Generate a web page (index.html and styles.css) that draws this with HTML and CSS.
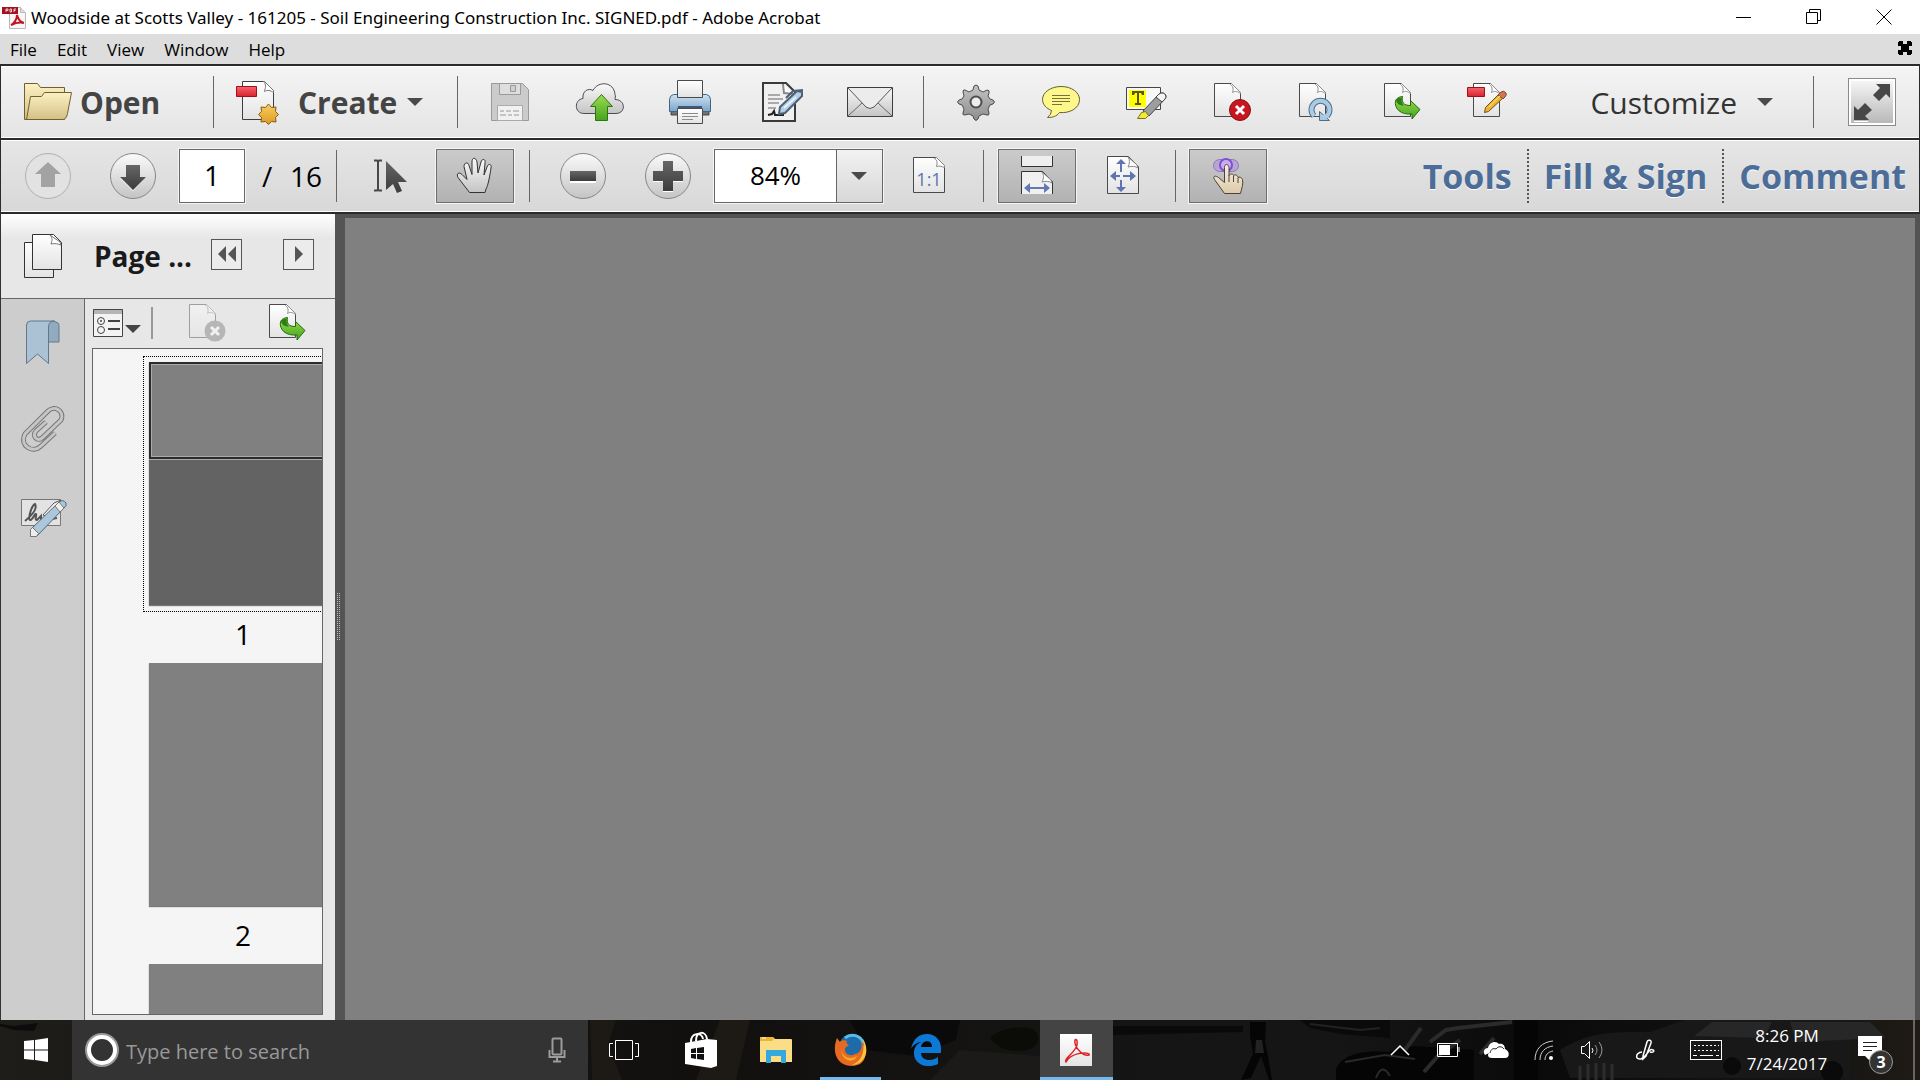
FILE: index.html
```html
<!DOCTYPE html>
<html lang="en">
<head>
	<meta charset="utf-8">
	<title>Woodside at Scotts Valley - 161205 - Soil Engineering Construction Inc. SIGNED.pdf - Adobe Acrobat</title>
	<link rel="stylesheet" href="styles.css">
</head>
<body>
  <!-- shared gradients and shapes -->
  <svg class="defs" width="0" height="0" aria-hidden="true">
    <defs>
      <linearGradient id="paper" x1="0" y1="0" x2="0" y2="1"><stop offset="0" stop-color="#fff"/><stop offset="1" stop-color="#e3e3e3"/></linearGradient>
      <linearGradient id="metal" x1="0" y1="0" x2="0" y2="1"><stop offset="0" stop-color="#fafafa"/><stop offset="1" stop-color="#c4c4c4"/></linearGradient>
      <linearGradient id="steel" x1="0" y1="0" x2="0" y2="1"><stop offset="0" stop-color="#c4c4c4"/><stop offset="1" stop-color="#8d8d8d"/></linearGradient>
      <linearGradient id="dark" x1="0" y1="0" x2="0" y2="1"><stop offset="0" stop-color="#666"/><stop offset="1" stop-color="#3c3c3c"/></linearGradient>
      <linearGradient id="green" x1="0" y1="0" x2="0" y2="1"><stop offset="0" stop-color="#9bdc52"/><stop offset="1" stop-color="#45a41c"/></linearGradient>
      <linearGradient id="red" x1="0" y1="0" x2="0" y2="1"><stop offset="0" stop-color="#f5646c"/><stop offset="1" stop-color="#d9222e"/></linearGradient>
      <linearGradient id="blue" x1="0" y1="0" x2="0" y2="1"><stop offset="0" stop-color="#cfe2f1"/><stop offset="1" stop-color="#7ba4ca"/></linearGradient>
      <linearGradient id="gold" x1="0" y1="0" x2="0" y2="1"><stop offset="0" stop-color="#f8ce62"/><stop offset="1" stop-color="#dc9a22"/></linearGradient>
      <linearGradient id="folder" x1="0" y1="0" x2="0" y2="1"><stop offset="0" stop-color="#fdf2c4"/><stop offset="1" stop-color="#d3bf84"/></linearGradient>
      <linearGradient id="skin" x1="0" y1="0" x2="0" y2="1"><stop offset="0" stop-color="#f8efe0"/><stop offset="1" stop-color="#dccaa9"/></linearGradient>
      <symbol id="page" viewBox="0 0 30 36">
        <path d="M1.500 1.500h17l9 9v24h-26z" fill="url(#paper)" stroke="#4a4a4a"/>
        <path d="M18.500 1.500l-1 1c3 2 3 5 2 8 3-2 5-1 8 1v-1z" fill="#fff" stroke="#8a8a8a"/>
      </symbol>
      <symbol id="extract" viewBox="0 0 52 52">
        <use href="#page" x="8" y="6" width="30" height="36"/>
        <path d="M20.500 24.500c1-2 4-4 7-4-1 6 1 9 8 9v-5l9.500 9-8 9.500v-5c-11 1-18-5-16.500-13.500z" fill="url(#green)" stroke="#1f6b0e"/>
        <path d="M21 24.500c1-2 3-3 6-3-1 4 0 6 2 8-5 0-7-2-8-5z" fill="#2c7d12"/>
      </symbol>
    </defs>
  </svg>

  <header class="titlebar">
    <svg class="app-icon" width="24" height="24" viewBox="0 0 24 24">
      <path d="M7.500 1.500h11l5 5v16h-16z" fill="#f6f6f6" stroke="#b9b9b9"/>
      <path d="M18.500 1.500v5h5" fill="#ddd" stroke="#b9b9b9"/>
      <path d="M9 19c3-1 6-6 6-10 1 4 3 7 7 8-4-1-9 0-13 2z" fill="none" stroke="#c5121d" stroke-width="2"/>
      <path d="M0 1h16v7H0z" fill="#a5121f"/>
      <path d="M4 6V3h2v1.500H4M8 3v3h1.500V3zM12 6V3h2M12 4.500h1.500" fill="none" stroke="#eccdd0"/>
    </svg>
    <span class="title">Woodside at Scotts Valley - 161205 - Soil Engineering Construction Inc. SIGNED.pdf - Adobe Acrobat</span>
    <div class="window-buttons">
      <button aria-label="Minimize"><svg width="16" height="16" viewBox="0 0 16 16"><path d="M0 8.500h15" stroke="#000"/></svg></button>
      <button aria-label="Restore"><svg width="16" height="16" viewBox="0 0 16 16"><path d="M.5 3.500h11v11H.5zM3.500 3.500v-3h11v11h-3" fill="none" stroke="#000"/></svg></button>
      <button aria-label="Close"><svg width="16" height="16" viewBox="0 0 16 16"><path d="M.5.5l15 15M15.500.5l-15 15" stroke="#000"/></svg></button>
    </div>
  </header>

  <nav class="menubar">
    <button>File</button>
    <button>Edit</button>
    <button>View</button>
    <button>Window</button>
    <button>Help</button>
    <button class="doc-close" aria-label="Close document"><svg width="14" height="14" viewBox="0 0 14 14"><path d="M1 1V0h4v3h4V0h4v1h1v4h-3v4h3v4h-1v1H9v-3H5v3H1v-1H0V9h3V5H0V1z" fill="#000"/></svg></button>
  </nav>

  <div class="toolbar toolbar-main">
    <button class="labelled open">
      <svg width="52" height="52" viewBox="0 0 52 52">
        <path d="M2.500 43.500v-36h13l3 4h24v32z" fill="url(#folder)" stroke="#71602e"/>
        <path d="M4.500 43.500l4-23h11l3-4h27l-4 21q-1 6-5 6z" fill="url(#folder)" stroke="#71602e"/>
      </svg>
      <span>Open</span>
    </button>
    <i class="sep"></i>
    <button class="labelled create">
      <svg width="52" height="52" viewBox="0 0 52 52">
        <path d="M10.500 5.500h22l9 9v29h-31z" fill="url(#paper)" stroke="#3d3d3d"/>
        <path d="M31.500 5.500c3 3 2 6 1 10 3-2 6-1 9 1v-2l-9-9z" fill="#fff" stroke="#777"/>
        <path d="M4.500 10.500h20v10h-20z" fill="url(#red)" stroke="#a01019"/>
        <path d="M36.500 28l3 3.500 4.500-.5-.5 4.500 3 3-3 3 .5 4.500-4.500-.5-3 3-3-3-4.500.5.500-4.500-3-3 3-3-.5-4.500 4.500.5z" fill="url(#gold)" stroke="#8a5a17"/>
      </svg>
      <span>Create</span>
      <svg class="caret" width="16" height="10" viewBox="0 0 16 10"><path d="M0 1h16L8 9z" fill="#4a4a4a"/></svg>
    </button>
    <i class="sep"></i>
    <div class="file-tools">
      <button aria-label="Save" disabled><svg width="52" height="52" viewBox="0 0 52 52">
        <path d="M7.500 7.500h31l6 6v31h-37z" fill="#cbcbcb" stroke="#9a9a9a"/>
        <path d="M15.500 7.500h21v11h-21z" fill="#dedede" stroke="#9a9a9a"/><path d="M26.500 9.500h5v6h-5z" fill="#d0d0d0" stroke="#999"/>
        <path d="M13.500 29.500h25v15h-25z" fill="#f1f1f1" stroke="#aaa"/><path d="M16 35h4m2 0h5m2 0h6M16 39h6m2 0h4m2 0h5" stroke="#c4c4c4" stroke-width="2"/>
      </svg></button>
      <button aria-label="Upload"><svg width="52" height="52" viewBox="0 0 52 52">
        <path d="M10 37.500c-10 0-10-14-1-15-1-7 5-11 10-8 5-10 21-9 22 4 1 2 0 3 0 5 11 0 11 14 1 14z" fill="url(#metal)" stroke="#4d4d4d"/>
        <path d="M27.500 18.500l11 12h-5v14h-12v-14h-5z" fill="url(#green)" stroke="#2d7513"/>
      </svg></button>
      <button aria-label="Print"><svg width="52" height="52" viewBox="0 0 52 52">
        <path d="M7 33h38v6H7z" fill="#6d7178" stroke="#44484d"/>
        <path d="M5.500 35.500v-12q0-4 4-5h33q4 1 4 5v12z" fill="url(#blue)" stroke="#426482"/>
        <path d="M13.500 4.500h25v17h-25z" fill="url(#paper)" stroke="#4a4a4a"/>
        <path d="M14 30h24v3H14z" fill="#3b5a78"/>
        <path d="M13.500 32.500h25v15h-25z" fill="url(#paper)" stroke="#4a4a4a"/><path d="M18 37.500h16M18 40.500h16M18 43.500h11" stroke="#8b8b8b"/>
      </svg></button>
      <button aria-label="Sign"><svg width="52" height="52" viewBox="0 0 52 52">
        <path d="M9 7h23l9 9v29H9z" fill="#f0f0f0" stroke="#3a3a3a" stroke-width="2"/><path d="M29 8l1 9 10 1" fill="#fff" stroke="#888" stroke-width="2"/>
        <path d="M14 19h12M14 23h15M14 27h11M14 32h8" stroke="#aaa" stroke-width="2"/>
        <path d="M14 39l4-1 2-3 1 4h9" fill="none" stroke="#222" stroke-width="2"/>
        <path d="M25 38l1-7 17-16 5 1v4L31 37z" fill="#b5cfe6" stroke="#4d6277" stroke-width="2"/><path d="M32 22l7-7 10-1" fill="none" stroke="#4d6277" stroke-width="2"/><path d="M30 32l12-11" stroke="#e6f1fa" stroke-width="2"/>
      </svg></button>
      <button aria-label="Email"><svg width="52" height="52" viewBox="0 0 52 52">
        <path d="M3.500 11.500h45v29h-45z" fill="url(#metal)" stroke="#3e3e3e"/><path d="M4 40l14-13M48 40L34 27" stroke="#666"/>
        <path d="M4 12l18 19q4 3 8 0l18-19" fill="#ececec" stroke="#555"/>
      </svg></button>
    </div>
    <i class="sep"></i>
    <div class="page-tools">
      <button aria-label="Preferences"><svg width="52" height="52" viewBox="0 0 52 52">
        <path d="M23 14l1-4q2-2 4 0l1 4 4 2 4-2q3 0 2 3l-1 3 2 3 3 1q3 2 0 4l-3 1-2 4 1 4q0 3-2 2l-4-1-4 2-1 3q-2 3-4 0l-1-3-4-2-4 1q-3 0-2-2l1-4-2-4-3-1q-3-2 0-4l3-1 2-3-1-4q0-3 2-2l4 2z" fill="url(#steel)" stroke="#4e4e4e"/>
        <circle cx="26" cy="26" r="5.500" fill="#eee" stroke="#4e4e4e" stroke-width="2"/>
      </svg></button>
      <button aria-label="Comment"><svg width="52" height="52" viewBox="0 0 52 52">
        <path d="M26 10.500c11 0 18.500 6 18.500 13 0 9-10 14-20 13-3 4-7 5-12 5q4-3 4-7c-5-2-9-6-9-11 0-7 8-13 18.500-13z" fill="#fdf78c" stroke="#66602f"/>
        <path d="M17 19.500h18M17 22.500h18M17 25.500h18M17 28.500h10" stroke="#77713c"/>
      </svg></button>
      <button aria-label="Highlight text"><svg width="52" height="52" viewBox="0 0 52 52">
        <path d="M6.500 11.500h34v22h-34z" fill="#f7f7f7" stroke="#444"/><path d="M9 14h17v17H9z" fill="#ff0"/>
        <path d="M12 15h12v4h-2l-1-2h-2v10h2v2h-6v-2h2V17h-2l-1 2h-2z" fill="#5c5413"/>
        <path d="M23 35l16-17c4-3 9 1 6 5L29 40z" fill="#9e9e9e" stroke="#444"/><path d="M36 21l3-3c4-3 9 1 6 5l-3 3z" fill="#f4f4f4" stroke="#444"/>
        <path d="M17.500 42.500l4-6 4-1 3 4-3 3z" fill="#f5ea2c" stroke="#77702a"/>
      </svg></button>
      <button aria-label="Delete pages"><svg width="52" height="52" viewBox="0 0 52 52">
        <use href="#page" x="8" y="6" width="30" height="36"/><circle cx="35" cy="34" r="10.500" fill="#c7161e" stroke="#861016"/><path d="M31 30l8 8M39 30l-8 8" stroke="#fff" stroke-width="3"/>
      </svg></button>
      <button aria-label="Rotate pages"><svg width="52" height="52" viewBox="0 0 52 52">
        <use href="#page" x="8" y="6" width="30" height="36"/>
        <path d="M24 40a9 9 0 1 1 13 0" fill="none" stroke="#4c6d87" stroke-width="6"/><path d="M29.500 35.500v9h10z" fill="#a9c8e0" stroke="#4c6d87"/><path d="M24 40a9 9 0 1 1 13 0l-4 1" fill="none" stroke="#a9cbe3" stroke-width="4"/>
      </svg></button>
      <button aria-label="Extract pages"><svg width="52" height="52"><use href="#extract"/></svg></button>
      <button aria-label="Edit PDF"><svg width="52" height="52" viewBox="0 0 52 52">
        <use href="#page" x="12" y="6" width="30" height="36"/><path d="M7.500 11.500h17v9h-17z" fill="url(#red)" stroke="#a01019"/>
        <path d="M24.500 36.500l1-5 14-14 4 4-15 14z" fill="#efb530" stroke="#6e5019"/><path d="M38 19l3-3q3-2 5 1 1 2-1 4l-2 2z" fill="#d17650" stroke="#7d4a33"/><path d="M29 31l11-11" stroke="#ffe48a"/>
      </svg></button>
    </div>
    <button class="labelled customize">
      <span>Customize</span>
      <svg class="caret" width="16" height="10" viewBox="0 0 16 10"><path d="M0 1h16L8 9z" fill="#4a4a4a"/></svg>
    </button>
    <i class="sep"></i>
    <button class="read-mode" aria-label="Read mode"><svg width="42" height="42" viewBox="0 0 42 42">
      <path d="M25 3h14v14l-4-4-7 7-6-6 7-7zM3 39V25l4 4 7-7 7 7-7 6 4 4z" fill="#474747"/><path d="M3 40.500h14" stroke="#fff"/>
    </svg></button>
  </div>

  <div class="toolbar toolbar-view">
    <button class="tool" aria-label="Previous page" disabled><svg width="52" height="52" viewBox="0 0 52 52"><circle cx="26" cy="26" r="22.500" fill="#e2e2e2" stroke="#b0b0b0"/><path d="M26 12l13 12h-6v13H19V24h-6z" fill="#a3a3a3"/></svg></button>
    <button class="tool" aria-label="Next page"><svg width="52" height="52" viewBox="0 0 52 52"><circle cx="26" cy="26" r="22.500" fill="url(#metal)" stroke="#868686"/><path d="M19 15h14v12h6L26 41 13 28h6z" fill="#fff"/><path d="M19 15h14v12h6L26 40 13 27h6z" fill="url(#dark)"/></svg></button>
    <input class="page-number" type="text" value="1" aria-label="Page number">
    <span class="page-total"><span>/</span><span>16</span></span>
    <i class="sep"></i>
    <button class="tool select-tool" aria-label="Select tool"><svg width="52" height="52" viewBox="0 0 52 52">
      <path d="M10 10.500h3l1 1 1-1h3M14 12v27M10 40.500h3l1-1 1 1h3" fill="none" stroke="#484848" stroke-width="2"/>
      <path d="M22 11v29l7-6 4 9 5-2-4-9h9z" fill="url(#dark)"/>
    </svg></button>
    <button class="tool pressed" aria-label="Hand tool"><svg width="52" height="52" viewBox="0 0 52 52">
      <path d="M20.500 42.500L9 27.500c-2-4 1-6 4-3l5 5-3-13c0-4 4-5 5-1l3 9V12c0-5 4-5 5 0l1 11 3-11c1-4 5-3 4 1l-1 12 3-8c1-4 5-3 4 1-1 7-3 18-5 21l-1 3.500z" fill="url(#metal)" stroke="#333"/>
    </svg></button>
    <i class="sep"></i>
    <div class="zoom-tools">
      <button class="tool" aria-label="Zoom out"><svg width="52" height="52" viewBox="0 0 52 52"><circle cx="26" cy="26" r="22.500" fill="url(#metal)" stroke="#868686"/><path d="M13 22h26v11H13z" fill="#fff"/><path d="M13 21h26v10H13z" fill="url(#dark)"/></svg></button>
      <button class="tool" aria-label="Zoom in"><svg width="52" height="52" viewBox="0 0 52 52"><circle cx="26" cy="26" r="22.500" fill="url(#metal)" stroke="#868686"/><path d="M21 12h10v10h10v10H31v10H21V32H11V22h10z" fill="#fff"/><path d="M21 11h10v10h10v10H31v10H21V31H11V21h10z" fill="url(#dark)"/></svg></button>
      <div class="zoom-level">
        <select aria-label="Zoom level"><option>84%</option><option>100%</option><option>125%</option></select>
        <svg class="caret" width="16" height="10" viewBox="0 0 16 10"><path d="M0 1h16L8 9z" fill="#4a4a4a"/></svg>
      </div>
      <button class="tool" aria-label="Actual size"><svg width="52" height="52" viewBox="0 0 52 52">
        <path d="M10.500 7.500h23l8 8v27h-31z" fill="url(#paper)" stroke="#4a4a4a"/><path d="M33.500 7.500l-2 1c3 2 3 4 2 8 3-1 5 0 8 1v-2z" fill="#fff" stroke="#888"/>
        <text x="26" y="36" text-anchor="middle" class="ratio">1:1</text>
      </svg></button>
    </div>
    <i class="sep"></i>
    <div class="fit-tools">
      <button class="tool pressed" aria-label="Fit width"><svg width="52" height="52" viewBox="0 0 52 52">
        <path d="M10.500 6v10.500h31V6" fill="#eee" stroke="#333"/><path d="M10.500 44V21.500h21l10 10V44z" fill="#f0f0f0"/><path d="M10.500 44V21.500h21l10 10V44" fill="none" stroke="#333"/>
        <path d="M31 22c2 3 2 6 0 10 4-1 7-1 10 1l-1-3z" fill="#fff" stroke="#888"/>
        <path d="M13 38l6-5v4h14v-4l6 5-6 5v-4H19v4z" fill="#6478b4"/>
      </svg></button>
      <button class="tool" aria-label="Fit page"><svg width="52" height="52" viewBox="0 0 52 52">
        <path d="M10.500 6.500h21l10 10v27h-31z" fill="url(#paper)" stroke="#4a4a4a"/><path d="M31 7c2 3 2 6 0 10 4-1 7-1 10 1l-1-3z" fill="#fff" stroke="#888"/>
        <path d="M24 9l5 5h-4v8h-2v-8h-4zM24 42l5-5h-4v-7h-2v7h-4zM13 26l6-5v4h4v2h-4v4zM39 26l-6-5v4h-7v2h7v4z" fill="#5e75b0"/>
      </svg></button>
    </div>
    <i class="sep"></i>
    <button class="tool pressed touch" aria-label="Touch mode"><svg width="52" height="52" viewBox="0 0 52 52">
      <rect x="11.500" y="9.500" width="25" height="12" rx="6" fill="#b7a5d4" stroke="#9079b8"/><circle cx="24" cy="15" r="6" fill="#c9aeef" stroke="#7e4fd0" stroke-width="2"/>
      <path d="M22.500 43.500l-10-14c-2-4 1-4 4-2l6 5v-15c0-4 4-4 4.500 0v8c1-2 4-2 4.500 0 1-1 4-1 4.500 2 1-1 4 0 4.500 2 1 5-1 9-2 14z" fill="url(#skin)" stroke="#4c4239"/><path d="M27 25v7M31.500 26v6M36 28v5" stroke="#4c4239"/>
    </svg></button>
    <div class="task-tabs">
      <a href="#tools">Tools</a>
      <a href="#sign">Fill &amp; Sign</a>
      <a href="#comment">Comment</a>
    </div>
  </div>

  <main class="workspace">
    <aside class="sidebar">
      <div class="panel-head">
        <button class="pages-tab" aria-label="Page thumbnails"><svg width="40" height="46" viewBox="0 0 40 46">
          <path d="M1.500 9.500h29v35h-29z" fill="url(#paper)" stroke="#333"/><path d="M9.500 1.500h21l8 8v27h-29z" fill="url(#paper)" stroke="#333"/>
          <path d="M27 2c3 3 2 6 1 9 4-1 7 0 10 1l-1-3z" fill="#fff" stroke="#777"/>
        </svg></button>
        <h2>Page ...</h2>
        <button class="square" aria-label="Collapse"><svg width="20" height="16" viewBox="0 0 20 16"><path d="M9 0v16L1 8zM19 0v16l-8-8z" fill="#555"/></svg></button>
        <button class="square expand" aria-label="Expand"><svg width="20" height="16" viewBox="0 0 20 16"><path d="M6 0v16l8-8z" fill="#555"/></svg></button>
      </div>
      <div class="panel-body">
        <div class="rail">
          <button aria-label="Bookmarks"><svg width="48" height="48" viewBox="0 0 48 48">
            <path d="M25 7q7-6 13-2c1 1 1 2 1 4v15H27z" fill="#93abc0" stroke="#60788b"/>
            <path d="M6.500 45.500V7q0-4 4-4h24q-6 0-6 6v36.500L17.500 36z" fill="#aac2d4" stroke="#60788b"/>
          </svg></button>
          <button aria-label="Attachments"><svg width="48" height="48" viewBox="0 0 48 48">
            <g fill="none"><path d="M35 27L21 40c-8 8-22 0-16-12L27 6c7-8 18-1 14 8L22 32c-5 4-10-2-6-7l10-9" stroke="#777" stroke-width="5"/><path d="M35 27L21 40c-8 8-22 0-16-12L27 6c7-8 18-1 14 8L22 32c-5 4-10-2-6-7l10-9" stroke="#c6c6c6" stroke-width="3"/></g>
          </svg></button>
          <button aria-label="Signatures"><svg width="48" height="48" viewBox="0 0 48 48">
            <path d="M1.500 5.500h39v26h-39z" fill="#e3e3e3" stroke="#777"/><path d="M5 27c6-5 13-12 10-17-4 2-7 15-5 16s5-7 6-6-2 6 1 6l4-4v4h5l11-2" fill="none" stroke="#555" stroke-width="2"/>
            <path d="M23 21l11-12 7-3-12 17z" fill="#f5f5f5" stroke="#555"/>
            <path d="M10.500 42.500v-7L39 8q4-3 7 1 1 3-2 5L17 42z" fill="#aac7dc" stroke="#58646e"/><path d="M10.500 42.500v-7l2-2 6 6-2 3zM35 12l4-4 5 6-4 4z" fill="#eee" stroke="#777"/>
          </svg></button>
        </div>
        <div class="thumbs">
          <div class="thumb-tools">
            <button class="options" aria-label="Thumbnail options"><svg width="50" height="32" viewBox="0 0 50 32">
              <path d="M1.500 2.500h29v27h-29z" fill="#f3f3f3" stroke="#444"/><path d="M2 3h28v4H2z" fill="#b5b5b5"/>
              <g fill="none" stroke="#444"><circle cx="9" cy="14" r="3.500"/><circle cx="9" cy="23" r="3.500"/></g><circle cx="9" cy="14" r="1" fill="#444"/><path d="M16 14h12M16 22h12" stroke="#444" stroke-width="2"/>
              <path d="M33 18h16l-8 8z" fill="#444"/>
            </svg></button>
            <i class="sep"></i>
            <button aria-label="Delete page" disabled><svg class="faded" width="52" height="52" viewBox="0 0 52 52">
              <use href="#page" x="8" y="6" width="30" height="36"/><circle cx="35" cy="34" r="10.500" fill="#7c7c7c"/><path d="M31 30l8 8M39 30l-8 8" stroke="#fff" stroke-width="3"/>
            </svg></button>
            <button aria-label="Extract page"><svg width="52" height="52"><use href="#extract"/></svg></button>
          </div>
          <div class="thumb-list">
            <div class="page-thumb selected"><div class="sheet"><div class="visible-area"></div></div><span>1</span></div>
            <div class="page-thumb"><div class="sheet"></div><span>2</span></div>
            <div class="page-thumb"><div class="sheet"></div></div>
          </div>
        </div>
      </div>
    </aside>
    <div class="splitter"><i></i></div>
    <section class="document"></section>
  </main>

  <footer class="taskbar">
    <!-- dimmed desktop scene behind the buttons -->
    <svg class="scene" width="1920" height="60" viewBox="0 0 1920 60" aria-hidden="true">
      <path d="M0 4l14 2 24-3-4 8-20-1-14-4z" fill="#0c0c0c"/>
      <path d="M590 0h26l-8 24 14 36h-30zM720 0h30l-14 60h-40z" fill="#1d1914"/>
      <path d="M850 0h110l-4 20-40 16-50-6z" fill="#0a0a0a"/><path d="M990 18c10-12 50-16 48 0 4 14-36 20-48 0z" fill="#0b0b08"/>
      <path d="M960 30l80 6v24H930z" fill="#1b1a18"/>
      <path d="M1113 6h130v6l-130 3zM1300 0h90v18l-50-4-30-6z" fill="#0a0a0a"/><path d="M1310 4l50 6 20-2" fill="none" stroke="#222" stroke-width="2"/>
      <path d="M1250 2h16l-1 20 3 14 4 24h-3l-8-24-10 22-10 2 12-26-3-18z" fill="#050505"/><path d="M1256 20h6l2 13h-9z" fill="#222"/>
      <path d="M1336 50c4-16 30-20 50-18l28-6 60 4v30h-138z" fill="#050505"/><path d="M1345 42l40-7 30 4M1376 58q6-16 14-2" fill="none" stroke="#292929" stroke-width="2"/>
      <path d="M1405 30l16-22M1430 22l16-12 12-2 54-6M1424 52l14-16 22-16M1480 34l14-16" fill="none" stroke="#2b2b2b" stroke-width="4"/>
      <path d="M1514 0h24v60h-24z" fill="#050505"/><path d="M1560 30c30-20 60-18 90-18l40-14h160v60h-280z" fill="#181818"/>
      <path d="M1580 46v14m8-16v16m8-17v17m8-17v17m8-16v16" stroke="#2c2c2c" stroke-width="3"/>
      <path d="M1694 16l18-14h60l-8 16zM1790 2h80l16 16-90 4z" fill="#272727"/>
      <circle cx="1732" cy="46" r="9" fill="#0a0a0a"/><circle cx="1832" cy="52" r="11" fill="#0a0a0a"/>
    </svg>
    <button class="start" aria-label="Start"><svg width="24" height="24" viewBox="0 0 24 24"><path d="M0 3l10-1v9.500H0zM11 2l13-2v11.500H11zM0 12.500h10V22L0 21zM11 12.500h13V24l-13-2z" fill="#fff"/></svg></button>
    <div class="search">
      <svg width="36" height="36" viewBox="0 0 36 36"><circle cx="18" cy="18" r="15.500" fill="none" stroke="#999" stroke-width="3"/><circle cx="18" cy="18" r="13" fill="none" stroke="#fff" stroke-width="4"/></svg>
      <input type="text" placeholder="Type here to search" aria-label="Search">
      <svg width="18" height="26" viewBox="0 0 18 26"><rect x="4.500" y="1.500" width="9" height="16" rx="1" fill="none" stroke="#9c9c9c" stroke-width="2"/><path d="M1.500 13v7h15v-7M9 20v4M5 24.500h8" fill="none" stroke="#9c9c9c" stroke-width="2"/></svg>
    </div>
    <div class="apps">
      <button class="task-view" aria-label="Task view"><svg width="30" height="20" viewBox="0 0 30 20"><path d="M6.500.5h17v19h-17zM4 3.500H.5v13H4M26 3.500h3.500v13H26" fill="none" stroke="#fff"/></svg></button>
      <button aria-label="Store"><svg width="34" height="38" viewBox="0 0 34 38"><path d="M1 12l22-4 10 1v26l-6 2-26-4z" fill="#fff"/><path d="M7 11C7 1 18 1 19 8M12 10C12-1 22 0 23 8" fill="none" stroke="#fff" stroke-width="2"/><path d="M7 18l5-1v5H7zM13 17l7-1v6h-7zM7 23h5v5l-5-1zM13 23h7v6l-7-1z" fill="#111"/></svg></button>
      <button aria-label="File Explorer"><svg width="34" height="30" viewBox="0 0 34 30"><path d="M1 2h13l2 2h16q1 0 1 1v22H1z" fill="#fbdd86"/><path d="M1 2h13l1 2-2 2H1z" fill="#edb72d"/><path d="M3 3h4" stroke="#fff"/><path d="M7 28V15h20v13h-5v-7H12v7z" fill="#33a9dd"/></svg></button>
      <button class="running" aria-label="Firefox"><svg width="34" height="34" viewBox="0 0 34 34"><circle cx="18" cy="14" r="13" fill="#1f6ba9"/><path d="M11 5c6-5 16-3 18 5" fill="none" stroke="#57bce8" stroke-width="3"/><path d="M3 5l3 4c2-2 5-2 7-1-1 2 0 3 2 4l-4 3c-1 6 5 9 10 6 5-1 8-6 6-13 7 9 7 25-10 25C4 33-3 20 3 5z" fill="#e66a20"/><path d="M29 6c7 11 3 25-11 26 10-4 13-13 11-26z" fill="#fbc63d"/><path d="M7 17c3 8 9 10 16 6-2 7-14 7-16-6z" fill="#f8a52b"/></svg></button>
      <button aria-label="Edge"><svg width="32" height="32" viewBox="0 0 32 32"><path d="M1 15C3 5 9 0 17 0c9 0 14 7 14 14v5H11c0 8 11 9 17 4v7c-10 5-25 1-24-12 0-5 4-9 8-10-5 0-9 3-11 7zM11 13h11c0-8-10-7-11 0z" fill="#0b79d5"/></svg></button>
      <button class="running active" aria-label="Adobe Acrobat"><svg width="34" height="34" viewBox="0 0 34 34"><path d="M1 1h32v32H1z" fill="url(#paper)"/><path d="M7 29c-3-3 10-10 11-17 1-7-3-7-2-2 1 6 9 14 14 12 2-3-13-3-20 3q-2 2-3 4z" fill="none" stroke="#df1f26" stroke-width="1.500"/></svg></button>
    </div>
    <div class="tray">
      <button aria-label="Show hidden icons"><svg width="20" height="12" viewBox="0 0 20 12"><path d="M1 11l9-9 9 9" fill="none" stroke="#fff" stroke-width="1.500"/></svg></button>
      <button aria-label="Battery"><svg width="24" height="16" viewBox="0 0 24 16"><path d="M1.500 1.500h20v13h-20zM23 5v5" fill="none" stroke="#fff"/><path d="M3 3h11v10H3z" fill="#fff"/></svg></button>
      <button aria-label="OneDrive"><svg width="26" height="18" viewBox="0 0 26 18"><path d="M2 14c-3-4 0-7 3-7C6 1 13-1 16 3c4-1 6 2 6 5 5 2 5 9 0 9H9c-4 0-5-3-3-5z" fill="#fff"/><path d="M7 12c1-4 3-5 6-4 2-3 6-3 8 0" fill="none" stroke="#222"/></svg></button>
      <button aria-label="Network"><svg width="20" height="22" viewBox="0 0 20 22"><path d="M1 21C1 10 8 3 19 2M6 21c0-8 5-13 13-14M11 21c0-5 3-8 8-9" fill="none" stroke="#ccc"/><circle cx="17" cy="19" r="2" fill="#fff"/></svg></button>
      <button aria-label="Volume"><svg width="24" height="20" viewBox="0 0 24 20"><path d="M1.500 6.500h3l5-5v17l-5-5h-3z" fill="none" stroke="#fff"/><path d="M12 8q2 2 0 5" fill="none" stroke="#fff"/><path d="M15 5q4 5 0 10M19 2q6 8 0 16" fill="none" stroke="#999"/></svg></button>
      <button class="wide" aria-label="Windows Ink"><svg width="22" height="24" viewBox="0 0 22 24"><path d="M8 18L12 4c1-3 5-2 4 1l-5 13-3 3zM7 14c-7 1-7 8-1 7 7-3 8-12 12-9 2 1 0 3-3 2" fill="none" stroke="#fff" stroke-width="1.500"/></svg></button>
      <button class="wide" aria-label="Touch keyboard"><svg width="34" height="22" viewBox="0 0 34 22"><rect x="1.500" y="1.500" width="31" height="19" fill="none" stroke="#fff"/><path d="M5 6.500h25M5 11.500h25" stroke="#fff" stroke-dasharray="2 2"/><path d="M4 16.500h4M11 16.500h13M27 16.500h3" stroke="#fff"/></svg></button>
      <div class="clock"><span>8:26 PM</span><span>7/24/2017</span></div>
      <button class="notifications" aria-label="Notifications"><svg width="26" height="28" viewBox="0 0 26 28"><path d="M1 0h24v20H15v7l-7-7H1z" fill="#fff"/><path d="M6 6.500h14M6 10.500h14M6 14.500h9" stroke="#222"/></svg><b>3</b></button>
      <i class="show-desktop"></i>
    </div>
  </footer>
</body>
</html>
```

FILE: styles.css
```css
* {
  box-sizing: border-box;
}
body {
  margin: 0;
  height: 100vh;
  display: flex;
  flex-direction: column;
  overflow: hidden;
  background: #808080;
  font-family: "Open Sans", "Noto Sans", sans-serif;
  font-size: 17px;
  color: #000;
}
button {
  margin: 0;
  padding: 0;
  border: 0;
  background: none;
  font: inherit;
  color: inherit;
  display: flex;
  align-items: center;
  justify-content: center;
  flex-shrink: 0;
}
svg {
  display: block;
  flex-shrink: 0;
}
.defs {
  position: absolute;
}

/* title and menu */
.titlebar {
  height: 34px;
  display: flex;
  align-items: center;
  background: #fff;
}
.app-icon {
  margin: 6px 5px 4px 2px;
}
.title {
  font-family: "Noto Sans", sans-serif;
  white-space: nowrap;
}
.window-buttons {
  margin: 0 1px 0 auto;
  display: flex;
}
.window-buttons button {
  width: 70px;
  height: 32px;
}
.menubar {
  height: 32px;
  display: flex;
  padding: 0 6px 0 0;
  background: #ddd;
  border-bottom: 2px solid #2b2b2b;
}
.menubar button {
  padding: 0 10px;
}
.menubar .doc-close {
  margin-left: auto;
  padding: 0 2px 2px;
}

/* toolbars */
.toolbar {
  height: 74px;
  display: flex;
  align-items: center;
  border: 1px solid #2b2b2b;
  border-width: 0 1px 2px;
  box-shadow: inset 0 1px #fff, inset 0 -1px #fff;
}
.toolbar-main {
  background: linear-gradient(#f4f4f4, #e4e4e4);
}
.toolbar-view {
  padding-left: 4px;
  background: linear-gradient(#e6e6e6, #d8d8d8);
}
.sep {
  width: 1px;
  height: 52px;
  background: #666;
  flex-shrink: 0;
}
.labelled {
  justify-content: flex-start;
  font-size: 30px;
  font-weight: bold;
  color: #444;
}
.open {
  width: 212px;
  padding-left: 21px;
}
.open span {
  padding-left: 6px;
}
.create {
  width: 243px;
  padding-left: 18px;
}
.create span {
  padding: 0 10px 0 14px;
}
.file-tools, .page-tools, .zoom-tools, .fit-tools {
  display: flex;
  align-items: center;
}
.file-tools {
  padding: 0 8px 0 7px;
}
.file-tools button {
  width: 90px;
}
.page-tools {
  padding-left: 9px;
}
.page-tools button {
  width: 85px;
}
.customize {
  margin-left: auto;
  padding-right: 40px;
  font-weight: normal;
  color: #333;
}
.customize span {
  padding-right: 20px;
}
.read-mode {
  width: 48px;
  height: 48px;
  margin: 0 23px 0 34px;
  border: 1px solid #8a8a8a;
  box-shadow: inset 0 0 0 2px #fff;
  background: linear-gradient(#f8f8f8, #b5b5b5);
}
.tool {
  width: 85px;
  height: 54px;
}
.pressed {
  width: 78px;
  margin: 0 4px 0 3px;
  border: 1px solid #6e6e6e;
  outline: 1px solid #f5f5f5;
  background: linear-gradient(#cbcbcb, #b2b2b2);
}
.page-number {
  width: 66px;
  height: 54px;
  margin: 0 0 0 4px;
  padding: 0 0 2px;
  border: 1px solid #666;
  outline: 1px solid #f5f5f5;
  text-align: center;
  font: 28px "Open Sans", sans-serif;
  background: #fff;
}
.page-total {
  width: 91px;
  display: flex;
  justify-content: space-between;
  padding: 0 14px 0 17px;
  font-size: 28px;
}
.select-tool {
  margin-left: 10px;
}
.toolbar-view > .select-tool + .pressed {
  margin-left: 4px;
}
.toolbar-view > .pressed + .sep {
  margin-left: 11px;
}
.zoom-tools {
  padding: 0 12px 0 10px;
}
.zoom-level {
  position: relative;
  margin: 0 3px 0 4px;
}
.zoom-level select {
  appearance: none;
  width: 169px;
  height: 54px;
  padding: 0 46px 2px 0;
  border: 1px solid #666;
  border-radius: 0;
  outline: 1px solid #f5f5f5;
  font: 26px "Open Sans", sans-serif;
  color: #000;
  text-align: center;
  text-align-last: center;
  background: linear-gradient(#666, #666) right 45px top / 1px 100% no-repeat, linear-gradient(#f2f2f2, #d8d8d8) right / 45px 100% no-repeat, #fff;
}
.zoom-level .caret {
  position: absolute;
  right: 16px;
  top: 22px;
  pointer-events: none;
}
.ratio {
  font: 18px "Open Sans", sans-serif;
  fill: #5f74b1;
}
.fit-tools {
  padding: 0 11px;
}
.fit-tools .pressed {
  margin-right: 4px;
}
.touch {
  margin-left: 13px;
}
.fit-tools + .sep {
  margin-left: -1px;
}
.task-tabs {
  margin-left: auto;
  padding-right: 1px;
  display: flex;
  align-items: center;
}
.task-tabs a {
  height: 54px;
  line-height: 54px;
  padding: 0 15px;
  font-size: 34px;
  font-weight: bold;
  color: #4d6d99;
  text-decoration: none;
  text-shadow: 0 1px #fff;
  white-space: nowrap;
}
.task-tabs a:last-child {
  padding-right: 12px;
}
.task-tabs a + a {
  border-left: 2px dotted #555;
}

/* navigation panel */
.workspace {
  flex: 1;
  min-height: 0;
  display: flex;
}
.sidebar {
  width: 335px;
  display: flex;
  flex-direction: column;
  background: #e7e7e7;
  border-left: 1px solid #333;
}
.panel-head {
  height: 85px;
  flex-shrink: 0;
  display: flex;
  align-items: center;
  border-bottom: 1px solid #666;
  background: linear-gradient(#fff, #e7e7e7 24px);
}
.pages-tab {
  width: 83px;
}
.panel-head h2 {
  width: 117px;
  margin: 0 0 0 10px;
  font-size: 28px;
  line-height: 36px;
  color: #1a1a1a;
  white-space: nowrap;
}
.square {
  width: 31px;
  height: 31px;
  margin-bottom: 4px;
  border: 1px solid #555;
  background: #ececec;
}
.square.expand {
  margin-left: 41px;
}
.panel-body {
  flex: 1;
  min-height: 0;
  display: flex;
}
.rail {
  width: 84px;
  padding-top: 19px;
  background: #cdcdcd;
  border-right: 1px solid #666;
}
.rail button {
  width: 83px;
  height: 48px;
  padding-left: 2px;
  margin-bottom: 40px;
}
.thumbs {
  flex: 1;
  min-width: 0;
  display: flex;
  flex-direction: column;
  padding: 0 12px 5px 7px;
}
.thumb-tools {
  height: 49px;
  display: flex;
  align-items: center;
  padding-bottom: 2px;
}
.thumb-tools .sep {
  width: 2px;
  height: 32px;
  margin: 0 27px 0 9px;
  background: #999;
}
.thumb-tools button + button {
  margin-left: 28px;
}
.faded {
  opacity: .45;
}
.thumb-list {
  flex: 1;
  min-height: 0;
  overflow: hidden;
  padding: 7px 0 0 50px;
  border: 1px solid #666;
  background: #f5f5f5;
}
.page-thumb {
  width: 200px;
  padding: 5px;
  border: 1px solid transparent;
  height: 256px;
  margin-bottom: 45px;
}
.page-thumb.selected {
  border: 1px dotted #000;
}
.sheet {
  height: 243px;
  background: #808080;
  box-shadow: 0 1px 1px #777;
}
.selected .sheet {
  background: #636363;
}
.visible-area {
  height: 97px;
  border: 2px solid #2b2b2b;
  box-shadow: inset 0 0 0 1px #aaa, 0 1px #aaa;
  background: #808080;
}
.page-thumb span {
  display: block;
  margin-top: 11px;
  text-align: center;
  font-size: 28px;
  line-height: 36px;
}
.splitter {
  width: 10px;
  background: #545454;
  display: flex;
  align-items: center;
}
.splitter i {
  width: 3px;
  height: 48px;
  margin-left: 2px;
  background: repeating-linear-gradient(transparent 0 1px, #545454 1px 2px), repeating-linear-gradient(90deg, #bbb 0 1px, #545454 1px 2px);
}
.document {
  flex: 1;
  background: #808080;
  border: solid #535353;
  border-width: 4px 5px 0 0;
}

/* taskbar */
.taskbar {
  position: relative;
  z-index: 0;
  height: 60px;
  flex-shrink: 0;
  display: flex;
  color: #fff;
  background: linear-gradient(90deg, #1e1d1a, #12100e 36%, #151515 60%, #151515 70%, #0a0a0a 80%, #141414 94%, #1f1a14);
}
.scene {
  position: absolute;
  right: 0;
  top: 0;
  z-index: -1;
}
.start {
  width: 72px;
}
.search {
  width: 516px;
  background: #333;
  display: flex;
  align-items: center;
  padding: 0 22px 0 12px;
}
.search input {
  flex: 1;
  min-width: 0;
  margin: 0;
  padding: 2px 0 0 6px;
  border: 0;
  background: none;
  color: #fff;
  font: 20px "Open Sans", sans-serif;
}
.search input::placeholder {
  color: #999;
  opacity: 1;
}
.apps, .tray {
  display: flex;
}
.apps button {
  width: 75px;
}
.apps .task-view {
  padding-right: 3px;
}
.apps .running {
  background: linear-gradient(#76b9ed, #76b9ed) bottom / 61px 3px no-repeat;
}
.apps .active {
  width: 73px;
  margin-left: 77px;
  padding-right: 2px;
  background: linear-gradient(#76b9ed, #76b9ed) bottom / 100% 3px no-repeat, #444;
}
.tray {
  margin-left: auto;
}
.tray button {
  width: 48px;
}
.tray .wide {
  width: 60px;
}
.clock {
  width: 102px;
  display: flex;
  flex-direction: column;
  justify-content: center;
  align-items: center;
  font-size: 17px;
  line-height: 28px;
}
.tray .notifications {
  width: 64px;
  position: relative;
}
.notifications b {
  position: absolute;
  right: 9px;
  bottom: 6px;
  width: 24px;
  height: 24px;
  border: 1px solid #999;
  border-radius: 12px;
  background: #333;
  font-size: 16px;
  line-height: 22px;
}
.show-desktop {
  width: 7px;
  margin-left: 11px;
  border-left: 2px solid #666;
}
```
